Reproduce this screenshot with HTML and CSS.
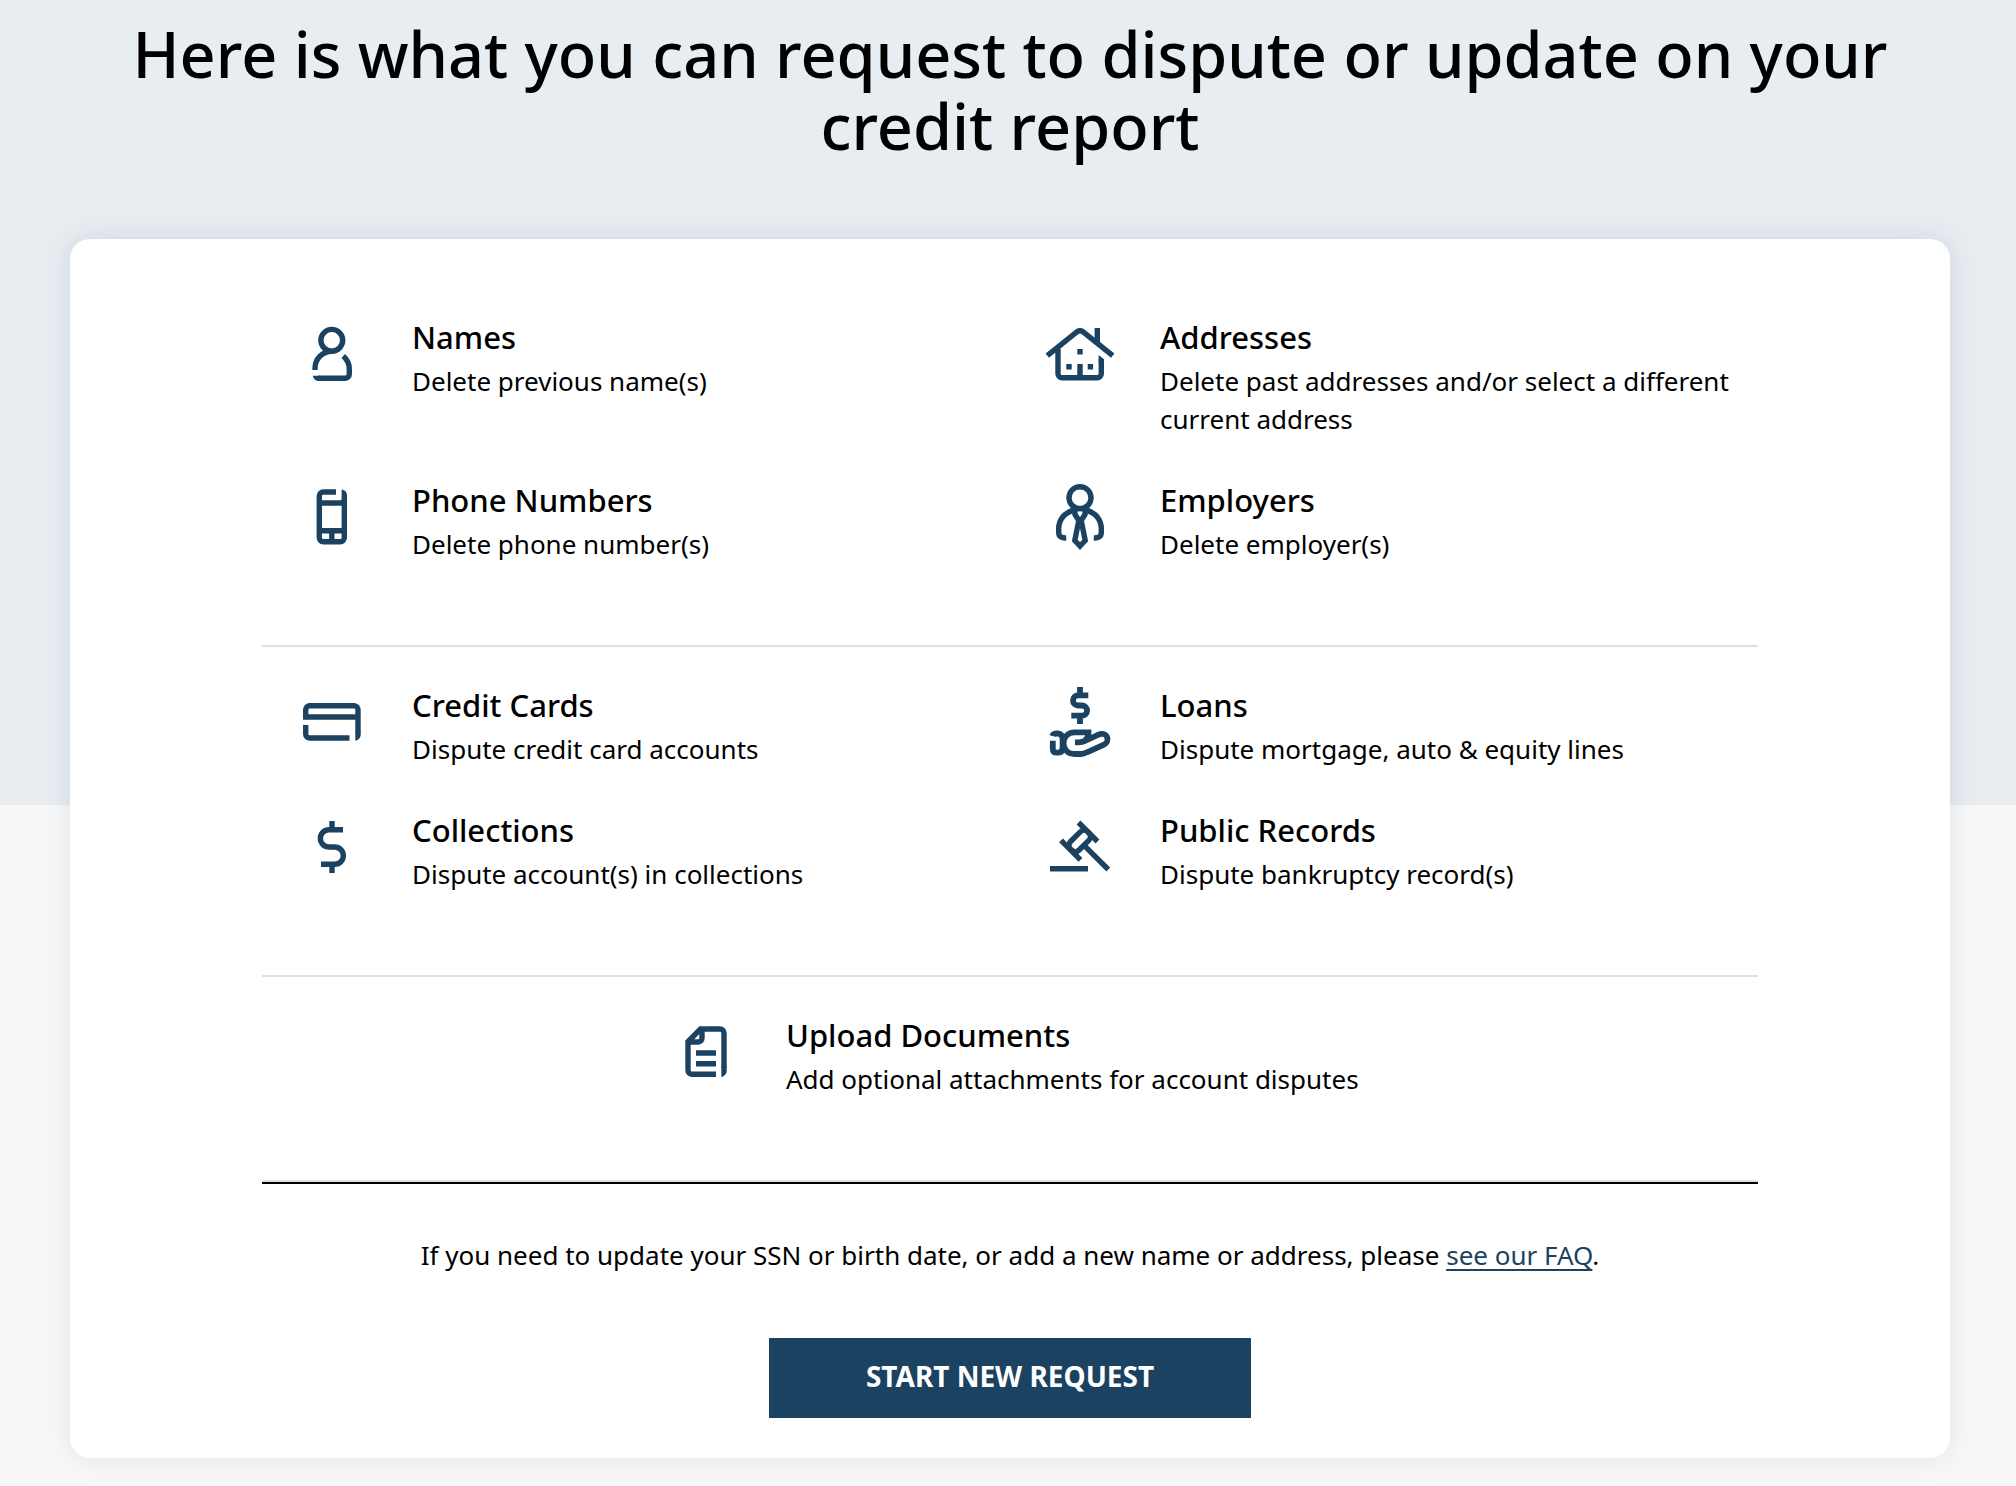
FILE: index.html
```html
<!DOCTYPE html>
<html lang="en">
<head>
<meta charset="utf-8">
<meta name="viewport" content="width=device-width, initial-scale=1">
<title>Dispute or update your credit report</title>
<link rel="stylesheet" href="styles.css">
</head>
<body>
<main class="page">
  <h1 class="page-title">Here is what you can request to dispute or update on your credit report</h1>
  <div class="card">
    <div class="content">
      <section class="group">
        <div class="item">
          <svg class="icon" viewBox="0 0 72 72" aria-hidden="true">
            <circle cx="35.8" cy="22.3" r="10.9"/>
            <path d="M19 52V50.5C19 41 26 33.5 36 33.3M47.2 38C51.2 41.5 53.3 46 53.3 51V56a4.3 4.3 0 0 1-4.3 4.3H22.5"/>
            <path class="solid" d="M16.7 57.7H24V63H23C19.8 63 17.5 61 16.7 57.7Z"/>
          </svg>
          <div class="text"><h2>Names</h2><p>Delete previous name(s)</p></div>
        </div>
        <div class="item">
          <svg class="icon" viewBox="0 0 72 72" aria-hidden="true">
            <path d="M3.3 37.7L33.5 13.5Q36 11.6 38.5 13.5L68.7 37.7M53.3 10V26M14 31V55.7a4 4 0 0 0 4 4H53.3a4 4 0 0 0 4-4V41M36 46V59.7"/>
            <path class="solid" d="M54.7 37L60 41.2V45H54.7ZM33.3 31h5.4v5.4h-5.4ZM22.3 46h5.4v5.4h-5.4ZM43.7 46h5.4v5.4h-5.4Z"/>
          </svg>
          <div class="text"><h2>Addresses</h2><p>Delete past addresses and/or select a different current address</p></div>
        </div>
        <div class="item">
          <svg class="icon" viewBox="0 0 72 72" aria-hidden="true">
            <path d="M40 11H27.3a4 4 0 0 0-4 4V56.7a4 4 0 0 0 4 4H44.3a4 4 0 0 0 4-4V18M23.3 22H48.3M23.3 49.8H48.3M35.8 50V60.7"/>
            <path class="solid" d="M45.6 8.4C49 8.9 51 11.3 51 14.5V20H45.6Z"/>
          </svg>
          <div class="text"><h2>Phone Numbers</h2><p>Delete phone number(s)</p></div>
        </div>
        <div class="item">
          <svg class="icon" viewBox="0 0 72 72" aria-hidden="true">
            <circle cx="36" cy="16.7" r="11"/>
            <path d="M29.5 29.5C20.5 31.3 14.7 39 14.7 47.5V51.5C14.7 55.2 17 57.2 22.2 57M42.5 29.5C51.5 31.3 57.3 39 57.3 47.5V51.5C57.3 55.2 55 57.2 49.8 57"/>
            <path d="M31 28.5V33.5L34 38.3H38L41 33.5V28.5M34.7 40L30.8 59.5L36 65L41.2 59.5L37.3 40Z"/>
          </svg>
          <div class="text"><h2>Employers</h2><p>Delete employer(s)</p></div>
        </div>
      </section>

      <section class="group">
        <div class="item">
          <svg class="icon" viewBox="0 0 72 72" aria-hidden="true">
            <path d="M7 31H62M9.7 33V23.7a4 4 0 0 1 4-4H58a4 4 0 0 1 4 4V46M9.7 39V48a4 4 0 0 0 4 4H53.5"/>
            <path class="solid" d="M59.3 45H64.7V48.5C64.7 51.7 62.5 54.1 59.3 54.7Z"/>
          </svg>
          <div class="text"><h2>Credit Cards</h2><p>Dispute credit card accounts</p></div>
        </div>
        <div class="item">
          <svg class="icon icon-loans" viewBox="0 0 72 72" aria-hidden="true">
            <path d="M44.3 9.3H34.1a5.1 5.1 0 0 0 0 10.2H38a5.1 5.1 0 0 1 0 10.2H27.3M36 1V9M36 30V38"/>
            <path d="M8.4 50C9 47.8 10.8 47.5 13 47.5H14C17 47.5 18.6 50 18.6 53V61.5C18.6 65 17 66.7 14 66.7H12.7C10 66.7 8.8 65.5 8.8 62.7V54.7"/>
            <path d="M31 56.4H34.5C38.5 56.4 40 55.5 42 54.5L54.5 48.6C58 47 61.7 47.8 63 51C64.3 54 63 57.2 60 58.6L43 66.3C40.5 67.6 39.5 68 37 68H30.5C24 68 19.5 63.5 19.5 57.3C19.5 51 24 46.4 30.5 46.4H44.5C44.5 49.8 43.5 52 41 54.5"/>
          </svg>
          <div class="text"><h2>Loans</h2><p>Dispute mortgage, auto &amp; equity lines</p></div>
        </div>
        <div class="item">
          <svg class="icon" viewBox="0 0 72 72" aria-hidden="true">
            <path d="M47 18.7H33a8.65 8.65 0 0 0 0 17.3H38.7a8.65 8.65 0 0 1 0 17.3H25M36 10V18M36 53V62"/>
          </svg>
          <div class="text"><h2>Collections</h2><p>Dispute account(s) in collections</p></div>
        </div>
        <div class="item">
          <svg class="icon" viewBox="0 0 72 72" aria-hidden="true">
            <path d="M6 57.7H44M41.3 35.7L64.3 58.5M34.5 11.5L53.5 30.5M17 29.3L36.5 48.8"/>
            <rect x="23.5" y="23.9" width="24.4" height="12" rx="5" transform="rotate(-45 35.7 29.9)"/>
          </svg>
          <div class="text"><h2>Public Records</h2><p>Dispute bankruptcy record(s)</p></div>
        </div>
      </section>

      <section class="group group-single">
        <div class="item">
          <svg class="icon" viewBox="0 0 72 72" aria-hidden="true">
            <path d="M46 58.3H22a4 4 0 0 1-4-4V25.5L30.5 13H50a4 4 0 0 1 4 4V52M32 13V22a4 4 0 0 1-4 4H18M26 37H46M26 47.7H46"/>
            <path class="solid" d="M51.3 50H56.7V55C56.7 58 54.5 60.3 51.3 61Z"/>
          </svg>
          <div class="text"><h2>Upload Documents</h2><p>Add optional attachments for account disputes</p></div>
        </div>
      </section>

      <div class="footer">
        <p>If you need to update your SSN or birth date, or add a new name or address, please <a href="#faq">see our FAQ</a>.</p>
        <button type="button" class="start">START NEW REQUEST</button>
      </div>
    </div>
  </div>
</main>
</body>
</html>
```
FILE: styles.css
```css
* { box-sizing: border-box; }

body {
  margin: 0;
  background: #f8f8f8;
  color: #000;
  font: 400 26px/38px "Noto Sans", sans-serif;
}

h1, h2, p { margin: 0; }

.page {
  padding: 18px 66px 29px 70px;
  background: linear-gradient(#e8edf1 805px, #f8f8f8 0);
}

.page-title {
  margin-bottom: 77px;
  font-size: 63px;
  font-weight: 500;
  line-height: 72px;
  text-align: center;
}

.card {
  padding: 40px 24px;
  border-radius: 20px;
  background: #fff;
  box-shadow: 0 0 28px rgba(27, 66, 97, 0.12);
}

.content {
  max-width: 1496px;
  margin: 0 auto;
}

.group {
  display: grid;
  grid-template-columns: 1fr 1fr;
  row-gap: 37px;
  padding: 33px 0 82px;
  border-bottom: 2px solid #e0e0e0;
}

.group-single {
  grid-template-columns: 50%;
  justify-content: center;
}

.item {
  display: flex;
  gap: 44px;
  padding-left: 34px;
}

.icon {
  flex: none;
  width: 72px;
  height: 72px;
  margin-top: 6px;
  fill: none;
  stroke: #1b4261;
  stroke-width: 5.4;
}

.icon-loans { stroke-width: 5.8; }

.icon .solid {
  fill: #1b4261;
  stroke: none;
}

.text h2 {
  font-size: 31px;
  font-weight: 500;
  line-height: 50px;
}

.footer {
  display: flex;
  flex-direction: column;
  align-items: center;
  gap: 64px;
  padding-top: 52px;
  border-top: 2px solid #000;
  text-align: center;
}

.footer a {
  color: #1b4261;
  text-decoration-thickness: 2px;
  text-underline-offset: 4px;
}

.start {
  width: 482px;
  max-width: 100%;
  height: 80px;
  padding: 0 0 4px;
  border: 0;
  background: #1b4261;
  color: #fff;
  font: 700 28px/38px "Noto Sans", sans-serif;
  cursor: pointer;
}
```
